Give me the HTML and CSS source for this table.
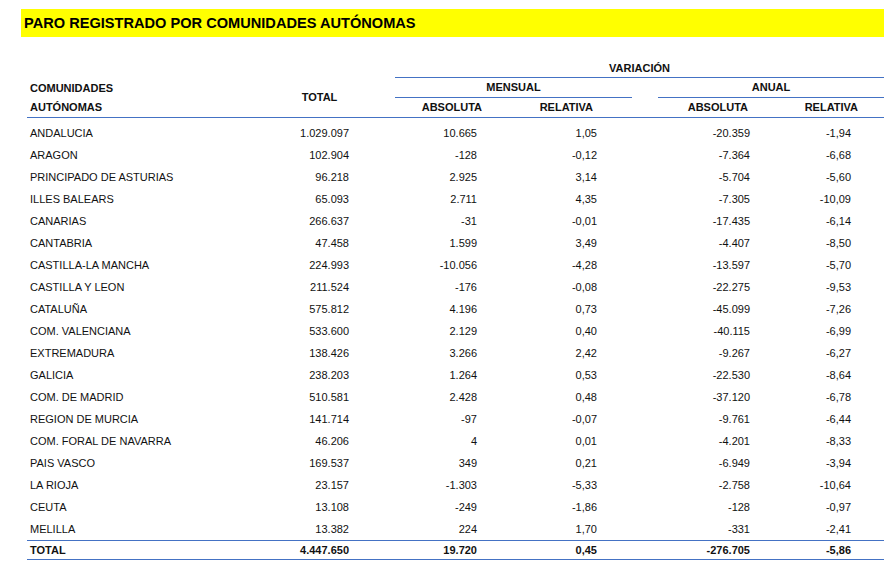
FILE: index.html
```html
<!DOCTYPE html>
<html lang="es">
<head>
<meta charset="utf-8">
<title>Paro registrado por comunidades autónomas</title>
<link rel="stylesheet" href="styles.css">
</head>
<body>
<div class="page">
  <h1 class="banner">PARO REGISTRADO POR COMUNIDADES AUTÓNOMAS</h1>
  <div class="sheet">
    <div class="head">
      <div class="h-var">VARIACIÓN</div>
      <div class="h-com1">COMUNIDADES</div>
      <div class="h-total">TOTAL</div>
      <div class="h-mens">MENSUAL</div>
      <div class="h-anual">ANUAL</div>
      <div class="h-com2">AUTÓNOMAS</div>
      <div class="h-sub c-ma">ABSOLUTA</div>
      <div class="h-sub c-mr">RELATIVA</div>
      <div class="h-sub c-aa">ABSOLUTA</div>
      <div class="h-sub c-ar">RELATIVA</div>
    </div>
    <div class="body">
      <div class="row"><span class="c-name">ANDALUCIA</span><span class="c-tot">1.029.097</span><span class="c-ma">10.665</span><span class="c-mr">1,05</span><span class="c-aa">-20.359</span><span class="c-ar">-1,94</span></div>
      <div class="row"><span class="c-name">ARAGON</span><span class="c-tot">102.904</span><span class="c-ma">-128</span><span class="c-mr">-0,12</span><span class="c-aa">-7.364</span><span class="c-ar">-6,68</span></div>
      <div class="row"><span class="c-name">PRINCIPADO DE ASTURIAS</span><span class="c-tot">96.218</span><span class="c-ma">2.925</span><span class="c-mr">3,14</span><span class="c-aa">-5.704</span><span class="c-ar">-5,60</span></div>
      <div class="row"><span class="c-name">ILLES BALEARS</span><span class="c-tot">65.093</span><span class="c-ma">2.711</span><span class="c-mr">4,35</span><span class="c-aa">-7.305</span><span class="c-ar">-10,09</span></div>
      <div class="row"><span class="c-name">CANARIAS</span><span class="c-tot">266.637</span><span class="c-ma">-31</span><span class="c-mr">-0,01</span><span class="c-aa">-17.435</span><span class="c-ar">-6,14</span></div>
      <div class="row"><span class="c-name">CANTABRIA</span><span class="c-tot">47.458</span><span class="c-ma">1.599</span><span class="c-mr">3,49</span><span class="c-aa">-4.407</span><span class="c-ar">-8,50</span></div>
      <div class="row"><span class="c-name">CASTILLA-LA MANCHA</span><span class="c-tot">224.993</span><span class="c-ma">-10.056</span><span class="c-mr">-4,28</span><span class="c-aa">-13.597</span><span class="c-ar">-5,70</span></div>
      <div class="row"><span class="c-name">CASTILLA Y LEON</span><span class="c-tot">211.524</span><span class="c-ma">-176</span><span class="c-mr">-0,08</span><span class="c-aa">-22.275</span><span class="c-ar">-9,53</span></div>
      <div class="row"><span class="c-name">CATALUÑA</span><span class="c-tot">575.812</span><span class="c-ma">4.196</span><span class="c-mr">0,73</span><span class="c-aa">-45.099</span><span class="c-ar">-7,26</span></div>
      <div class="row"><span class="c-name">COM. VALENCIANA</span><span class="c-tot">533.600</span><span class="c-ma">2.129</span><span class="c-mr">0,40</span><span class="c-aa">-40.115</span><span class="c-ar">-6,99</span></div>
      <div class="row"><span class="c-name">EXTREMADURA</span><span class="c-tot">138.426</span><span class="c-ma">3.266</span><span class="c-mr">2,42</span><span class="c-aa">-9.267</span><span class="c-ar">-6,27</span></div>
      <div class="row"><span class="c-name">GALICIA</span><span class="c-tot">238.203</span><span class="c-ma">1.264</span><span class="c-mr">0,53</span><span class="c-aa">-22.530</span><span class="c-ar">-8,64</span></div>
      <div class="row"><span class="c-name">COM. DE MADRID</span><span class="c-tot">510.581</span><span class="c-ma">2.428</span><span class="c-mr">0,48</span><span class="c-aa">-37.120</span><span class="c-ar">-6,78</span></div>
      <div class="row"><span class="c-name">REGION DE MURCIA</span><span class="c-tot">141.714</span><span class="c-ma">-97</span><span class="c-mr">-0,07</span><span class="c-aa">-9.761</span><span class="c-ar">-6,44</span></div>
      <div class="row"><span class="c-name">COM. FORAL DE NAVARRA</span><span class="c-tot">46.206</span><span class="c-ma">4</span><span class="c-mr">0,01</span><span class="c-aa">-4.201</span><span class="c-ar">-8,33</span></div>
      <div class="row"><span class="c-name">PAIS VASCO</span><span class="c-tot">169.537</span><span class="c-ma">349</span><span class="c-mr">0,21</span><span class="c-aa">-6.949</span><span class="c-ar">-3,94</span></div>
      <div class="row"><span class="c-name">LA RIOJA</span><span class="c-tot">23.157</span><span class="c-ma">-1.303</span><span class="c-mr">-5,33</span><span class="c-aa">-2.758</span><span class="c-ar">-10,64</span></div>
      <div class="row"><span class="c-name">CEUTA</span><span class="c-tot">13.108</span><span class="c-ma">-249</span><span class="c-mr">-1,86</span><span class="c-aa">-128</span><span class="c-ar">-0,97</span></div>
      <div class="row"><span class="c-name">MELILLA</span><span class="c-tot">13.382</span><span class="c-ma">224</span><span class="c-mr">1,70</span><span class="c-aa">-331</span><span class="c-ar">-2,41</span></div>
      <div class="row total"><span class="c-name">TOTAL</span><span class="c-tot">4.447.650</span><span class="c-ma">19.720</span><span class="c-mr">0,45</span><span class="c-aa">-276.705</span><span class="c-ar">-5,86</span></div>
    </div>
  </div>
</div>
</body>
</html>
```

FILE: styles.css
```css
* { box-sizing: border-box; }

html, body {
  margin: 0;
  padding: 0;
  background: #ffffff;
}

body {
  font-family: "Liberation Sans", Arial, sans-serif;
  color: #111111;
  font-size: 11px;
}

.page {
  padding: 9px 7px 0 21px;
  width: 891px;
}

.banner {
  margin: 0;
  height: 28px;
  width: 863px;
  background: #ffff00;
  font-size: 14.6px;
  font-weight: bold;
  line-height: 28px;
  padding-left: 3px;
  color: #000;
}

.sheet {
  margin: 21px 0 0 6px;
  width: 857px;
  --cols: 263px 75px 30px 115px 122px 26px 112px 114px;
}

.head {
  display: grid;
  grid-template-columns: var(--cols);
  grid-template-rows: 20px 20px 19px;
  border-bottom: 1px solid #4472c4;
  font-weight: bold;
  line-height: 13px;
}

.head > div {
  display: flex;
  align-items: center;
}

.h-var {
  grid-column: 4 / 9;
  grid-row: 1;
  justify-content: center;
  border-bottom: 1px solid #4472c4;
  padding-top: 2px;
}

.h-com1 {
  grid-column: 1;
  grid-row: 2;
  padding-left: 3px;
}

.h-com2 {
  grid-column: 1;
  grid-row: 3;
  padding-left: 3px;
  padding-bottom: 1px;
}

.h-total {
  grid-column: 2;
  grid-row: 2 / 4;
  justify-content: center;
  padding-right: 16px;
}

.h-mens {
  grid-column: 4 / 6;
  grid-row: 2;
  justify-content: center;
  border-bottom: 1px solid #4472c4;
}

.h-anual {
  grid-column: 7 / 9;
  grid-row: 2;
  justify-content: center;
  border-bottom: 1px solid #4472c4;
}

.h-sub {
  grid-row: 3;
  justify-content: flex-end;
  padding-bottom: 1px;
}

.h-sub.c-ma { padding-right: 28px; }
.h-sub.c-mr { padding-right: 39px; }
.h-sub.c-aa { padding-right: 22px; }
.h-sub.c-ar { padding-right: 26px; }

.body {
  padding-top: 4px;
}

.row {
  display: grid;
  grid-template-columns: var(--cols);
  height: 22px;
  align-items: center;
  line-height: 13px;
}

.row > span { text-align: right; }

.row .c-name { grid-column: 1; text-align: left; padding-left: 3px; }
.row .c-tot { grid-column: 2; padding-right: 16px; }
.row .c-ma { grid-column: 4; padding-right: 33px; }
.row .c-mr { grid-column: 5; padding-right: 35px; }
.row .c-aa { grid-column: 7; padding-right: 20px; }
.row .c-ar { grid-column: 8; padding-right: 33px; }

.head .c-ma { grid-column: 4; }
.head .c-mr { grid-column: 5; }
.head .c-aa { grid-column: 7; }
.head .c-ar { grid-column: 8; }

.row.total {
  height: 20px;
  font-weight: bold;
  border-top: 1px solid #4472c4;
  border-bottom: 1px solid #4472c4;
}
```
